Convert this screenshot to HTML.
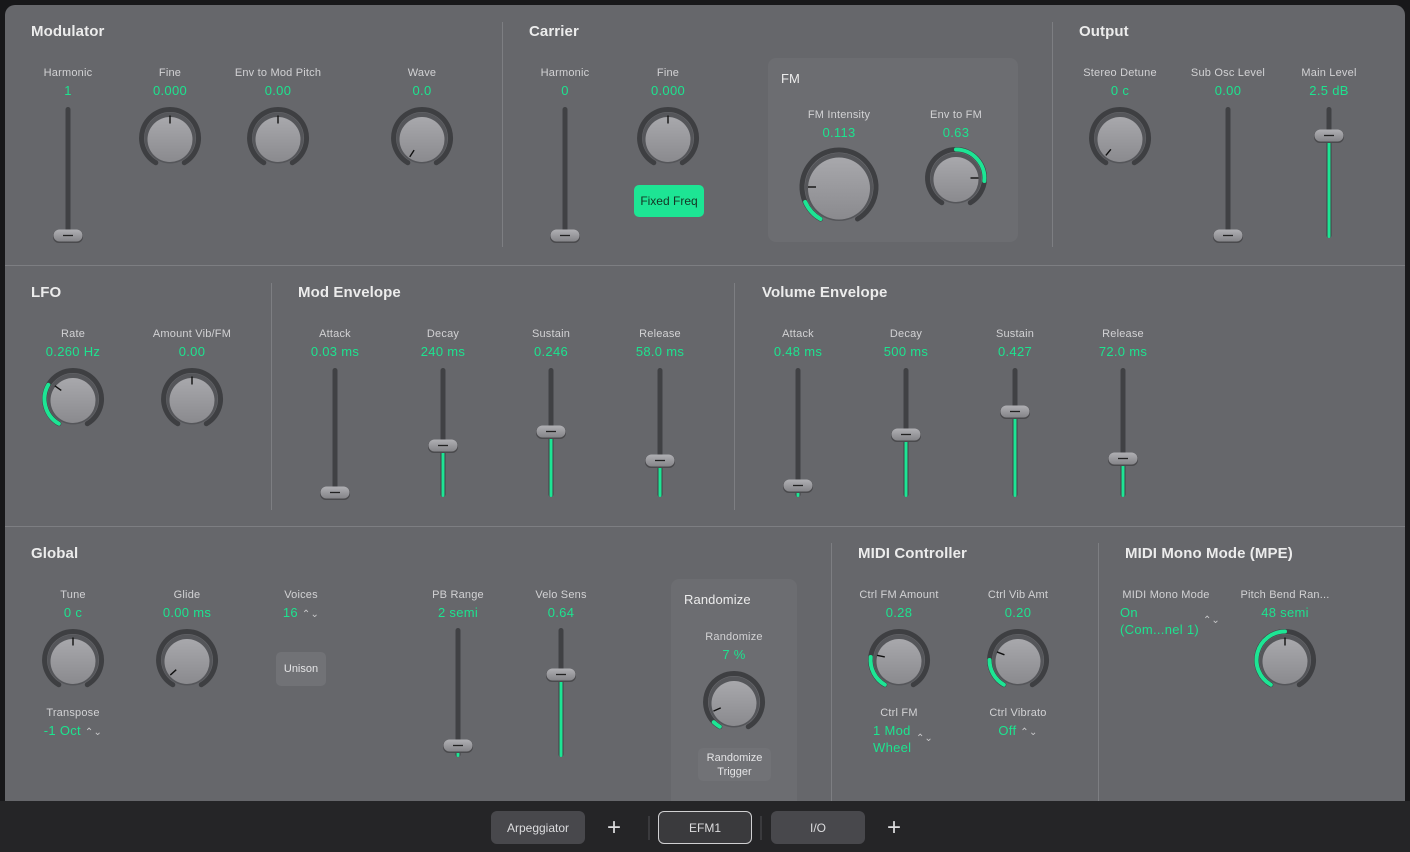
<!DOCTYPE html>
<html><head><meta charset="utf-8">
<style>
*{margin:0;padding:0;box-sizing:border-box}
html,body{width:1410px;height:852px;overflow:hidden;background:#18181a;font-family:"Liberation Sans",sans-serif}
#panel{position:absolute;left:5px;top:5px;width:1400px;height:840px;background:#66676b;border-radius:10px 10px 0 0}
#bar{position:absolute;left:0;top:801px;width:1410px;height:51px;background:#252527}
.t{position:absolute;font-size:15px;color:#ececec;font-weight:bold;letter-spacing:.1px}
.l{position:absolute;font-size:11px;color:#d2d2d4;transform:translateX(-50%);white-space:nowrap;letter-spacing:.2px}
.v{position:absolute;font-size:13px;color:#1de38f;transform:translateX(-50%);white-space:nowrap;letter-spacing:.3px}
.vl{position:absolute;font-size:13px;color:#1de38f;white-space:nowrap;line-height:17px;letter-spacing:.3px}
.ar{color:#c8c8ca;font-size:10px}
.vd{position:absolute;width:1px;background:#7d7e82}
.hd{position:absolute;height:1px;background:#7d7e82;left:5px;width:1400px}
.box{position:absolute;background:#6c6d71;border-radius:8px}
.btn{position:absolute;background:#717276;border-radius:5px;color:#e4e4e6;font-size:11px;text-align:center;display:flex;align-items:center;justify-content:center;line-height:14px}
.bb{position:absolute;top:811px;height:33px;border-radius:6px;background:#48484c;color:#dcdcde;font-size:12px;display:flex;align-items:center;justify-content:center}
.plus{position:absolute;top:814px;color:#dcdcde;font-size:24px;font-weight:300}
.sep{position:absolute;top:816px;width:2px;height:24px;background:#3a3a3d}
svg{position:absolute;left:0;top:0}
</style></head><body>
<div id="panel"></div>
<div class="hd" style="top:265px"></div>
<div class="hd" style="top:526px"></div>
<div class="vd" style="left:502px;top:22px;height:225px"></div>
<div class="vd" style="left:1052px;top:22px;height:225px"></div>
<div class="vd" style="left:271px;top:283px;height:227px"></div>
<div class="vd" style="left:734px;top:283px;height:227px"></div>
<div class="vd" style="left:831px;top:543px;height:258px"></div>
<div class="vd" style="left:1098px;top:543px;height:258px"></div>
<div class="box" style="left:768px;top:58px;width:250px;height:184px"></div>
<div class="box" style="left:671px;top:579px;width:126px;height:230px"></div>

<div class="t" style="left:31px;top:23px">Modulator</div>
<div class="t" style="left:529px;top:23px">Carrier</div>
<div class="t" style="left:1079px;top:23px">Output</div>
<div class="t" style="left:781px;top:71px;font-weight:normal;font-size:13px">FM</div>
<div class="t" style="left:31px;top:284px">LFO</div>
<div class="t" style="left:298px;top:284px">Mod Envelope</div>
<div class="t" style="left:762px;top:284px">Volume Envelope</div>
<div class="t" style="left:31px;top:545px">Global</div>
<div class="t" style="left:858px;top:545px">MIDI Controller</div>
<div class="t" style="left:1125px;top:545px">MIDI Mono Mode (MPE)</div>
<div class="t" style="left:684px;top:592px;font-weight:normal;font-size:13px">Randomize</div>

<div class="l" style="left:68px;top:67px">Harmonic</div><div class="v" style="left:68px;top:83px">1</div>
<div class="l" style="left:170px;top:67px">Fine</div><div class="v" style="left:170px;top:83px">0.000</div>
<div class="l" style="left:278px;top:67px">Env to Mod Pitch</div><div class="v" style="left:278px;top:83px">0.00</div>
<div class="l" style="left:422px;top:67px">Wave</div><div class="v" style="left:422px;top:83px">0.0</div>
<div class="l" style="left:565px;top:67px">Harmonic</div><div class="v" style="left:565px;top:83px">0</div>
<div class="l" style="left:668px;top:67px">Fine</div><div class="v" style="left:668px;top:83px">0.000</div>
<div class="l" style="left:839px;top:109px">FM Intensity</div><div class="v" style="left:839px;top:125px">0.113</div>
<div class="l" style="left:956px;top:109px">Env to FM</div><div class="v" style="left:956px;top:125px">0.63</div>
<div class="l" style="left:1120px;top:67px">Stereo Detune</div><div class="v" style="left:1120px;top:83px">0 c</div>
<div class="l" style="left:1228px;top:67px">Sub Osc Level</div><div class="v" style="left:1228px;top:83px">0.00</div>
<div class="l" style="left:1329px;top:67px">Main Level</div><div class="v" style="left:1329px;top:83px">2.5 dB</div>

<div class="l" style="left:73px;top:328px">Rate</div><div class="v" style="left:73px;top:344px">0.260 Hz</div>
<div class="l" style="left:192px;top:328px">Amount Vib/FM</div><div class="v" style="left:192px;top:344px">0.00</div>
<div class="l" style="left:335px;top:328px">Attack</div><div class="v" style="left:335px;top:344px">0.03 ms</div>
<div class="l" style="left:443px;top:328px">Decay</div><div class="v" style="left:443px;top:344px">240 ms</div>
<div class="l" style="left:551px;top:328px">Sustain</div><div class="v" style="left:551px;top:344px">0.246</div>
<div class="l" style="left:660px;top:328px">Release</div><div class="v" style="left:660px;top:344px">58.0 ms</div>
<div class="l" style="left:798px;top:328px">Attack</div><div class="v" style="left:798px;top:344px">0.48 ms</div>
<div class="l" style="left:906px;top:328px">Decay</div><div class="v" style="left:906px;top:344px">500 ms</div>
<div class="l" style="left:1015px;top:328px">Sustain</div><div class="v" style="left:1015px;top:344px">0.427</div>
<div class="l" style="left:1123px;top:328px">Release</div><div class="v" style="left:1123px;top:344px">72.0 ms</div>

<div class="l" style="left:73px;top:589px">Tune</div><div class="v" style="left:73px;top:605px">0 c</div>
<div class="l" style="left:187px;top:589px">Glide</div><div class="v" style="left:187px;top:605px">0.00 ms</div>
<div class="l" style="left:301px;top:589px">Voices</div><div class="v" style="left:301px;top:605px">16 <span class="ar">⌃⌄</span></div>
<div class="l" style="left:73px;top:707px">Transpose</div><div class="v" style="left:73px;top:723px">-1 Oct <span class="ar">⌃⌄</span></div>
<div class="l" style="left:458px;top:589px">PB Range</div><div class="v" style="left:458px;top:605px">2 semi</div>
<div class="l" style="left:561px;top:589px">Velo Sens</div><div class="v" style="left:561px;top:605px">0.64</div>
<div class="l" style="left:734px;top:631px">Randomize</div><div class="v" style="left:734px;top:647px">7 %</div>
<div class="l" style="left:899px;top:589px">Ctrl FM Amount</div><div class="v" style="left:899px;top:605px">0.28</div>
<div class="l" style="left:1018px;top:589px">Ctrl Vib Amt</div><div class="v" style="left:1018px;top:605px">0.20</div>
<div class="l" style="left:899px;top:707px">Ctrl FM</div>
<div class="vl" style="left:873px;top:722px">1 Mod<br>Wheel</div><div class="ar" style="position:absolute;left:916px;top:733px">⌃⌄</div>
<div class="l" style="left:1018px;top:707px">Ctrl Vibrato</div><div class="v" style="left:1018px;top:723px">Off <span class="ar">⌃⌄</span></div>
<div class="l" style="left:1166px;top:589px">MIDI Mono Mode</div>
<div class="vl" style="left:1120px;top:604px">On<br>(Com...nel 1)</div><div class="ar" style="position:absolute;left:1203px;top:615px">⌃⌄</div>
<div class="l" style="left:1285px;top:589px">Pitch Bend Ran...</div><div class="v" style="left:1285px;top:605px">48 semi</div>

<div class="btn" style="left:634px;top:185px;width:70px;height:32px;background:#1de594;color:#143524;font-size:12px">Fixed Freq</div>
<div class="btn" style="left:276px;top:652px;width:50px;height:34px">Unison</div>
<div class="btn" style="left:698px;top:748px;width:73px;height:33px">Randomize<br>Trigger</div>

<div id="bar"></div>
<div class="bb" style="left:491px;width:94px">Arpeggiator</div>
<div class="plus" style="left:607px">+</div>
<div class="sep" style="left:648px"></div>
<div class="bb" style="left:658px;width:94px;background:#3a3a3d;border:1.5px solid #d0d0d2">EFM1</div>
<div class="sep" style="left:760px"></div>
<div class="bb" style="left:771px;width:94px">I/O</div>
<div class="plus" style="left:887px">+</div>

<svg id="g" width="1410" height="852"></svg>
<script>
var s='<defs><linearGradient id="kb" x1="0" y1="0" x2="0" y2="1"><stop offset="0" stop-color="#a8a8ac"/><stop offset="1" stop-color="#8a8a8e"/></linearGradient><linearGradient id="th" x1="0" y1="0" x2="0" y2="1"><stop offset="0" stop-color="#b0b0b4"/><stop offset="1" stop-color="#848488"/></linearGradient></defs>';
function P(cx,cy,r,a){a=a*Math.PI/180;return [cx+r*Math.sin(a),cy-r*Math.cos(a)];}
function arc(cx,cy,r,a0,a1,c,w){var p=P(cx,cy,r,a0),q=P(cx,cy,r,a1);var l=(a1-a0)>180?1:0;return '<path d="M'+p[0].toFixed(1)+' '+p[1].toFixed(1)+' A'+r+' '+r+' 0 '+l+' 1 '+q[0].toFixed(1)+' '+q[1].toFixed(1)+'" fill="none" stroke="'+c+'" stroke-width="'+w+'" stroke-linecap="round"/>';}
function k(cx,cy,R,v,g0,g1){var a=-150+300*v;s+=arc(cx,cy,R,-150,150,'#3e3f42',5);
if(g0!=null){s+=arc(cx,cy,R,-150+300*g0,-150+300*g1,'#1de594',4);}
var br=R-3;s+='<circle cx="'+cx+'" cy="'+cy+'" r="'+br+'" fill="#55565a"/><circle cx="'+cx+'" cy="'+(cy+1.5)+'" r="'+(br-3)+'" fill="url(#kb)"/>';
var p=P(cx,cy,br-3,a),q=P(cx,cy,br-11,a);s+='<line x1="'+p[0]+'" y1="'+p[1]+'" x2="'+q[0]+'" y2="'+q[1]+'" stroke="#111" stroke-width="1.4"/>';}
function sl(x,y0,y1,ty,green){s+='<rect x="'+(x-2.5)+'" y="'+y0+'" width="5" height="'+(y1-y0)+'" rx="2.5" fill="#404144"/>';
if(green)s+='<rect x="'+(x-1.5)+'" y="'+ty+'" width="3" height="'+(y1-ty)+'" rx="1.5" fill="#1de594"/>';
s+='<rect x="'+(x-15)+'" y="'+(ty-6)+'" width="30" height="13" rx="6" fill="#4a4a4d"/><rect x="'+(x-14.5)+'" y="'+(ty-6.5)+'" width="29" height="12" rx="6" fill="url(#th)"/><line x1="'+(x-5)+'" y1="'+(ty-.5)+'" x2="'+(x+5)+'" y2="'+(ty-.5)+'" stroke="#222" stroke-width="1.3"/>';}
k(170,138,28.5,.5);k(278,138,28.5,.5);k(422,138,28.5,.01);k(668,138,28.5,.5);
k(839,187,37,.2,0,.12);k(956,178,28.5,.8,.5,.82);k(1120,138,28.5,.03);
k(73,399,28.5,.32,0,.3);k(192,399,28.5,.5);
k(73,660,28.5,.5);k(187,660,28.5,.06);k(734,702,28.5,.12,0,.05);
k(899,660,28.5,.24,0,.22);k(1018,660,28.5,.27,0,.2);k(1285,660,28.5,.5,0,.5);
sl(68,107,238,236,0);sl(565,107,238,236,0);sl(1228,107,238,236,0);sl(1329,107,238,136,1);
sl(335,368,497,493,0);sl(443,368,497,446,1);sl(551,368,497,432,1);sl(660,368,497,461,1);
sl(798,368,497,486,1);sl(906,368,497,435,1);sl(1015,368,497,412,1);sl(1123,368,497,459,1);
sl(458,628,757,746,1);sl(561,628,757,675,1);
document.getElementById('g').innerHTML=s;
</script>
</body></html>
